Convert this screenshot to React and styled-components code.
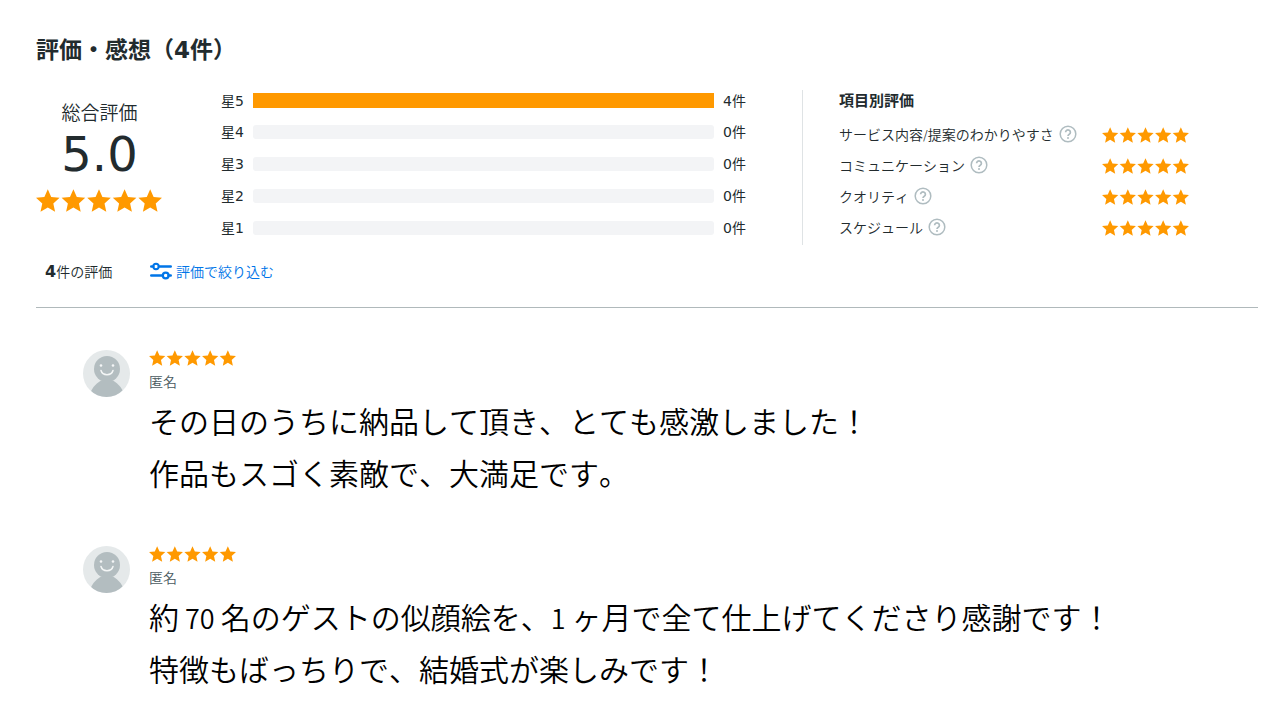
import React, { useId, useState } from 'react'
import styled, { createGlobalStyle } from 'styled-components'

const GlobalStyle = createGlobalStyle`
* { box-sizing: border-box; }
body {
  margin: 0;
  background: #fff;
  color: #222b2e;
  font-family: "DejaVu Sans", "Noto Sans CJK JP", sans-serif;
  font-size: 14px;
  font-kerning: none;
}
`
const Page = styled.main`
padding: 34px 22px 16px 36px;
`
const Heading = styled.h2`
margin: 0;
font-size: 23px;
line-height: 32px;
font-weight: 700;
`
const Summary = styled.section`
display: flex;
align-items: flex-start;
margin-top: 24px;
`
const Total = styled.div`
width: 127px;
margin-right: 58px;
padding-top: 11px;
text-align: center;
`
const TotalLabel = styled.div`
font-size: 19px;
font-weight: 350;
line-height: 24px;
`
const Score = styled.div`
font-size: 48px;
line-height: 58px;
margin-bottom: 6px;
`
const Stars = styled.svg`
display: block;
fill: #ff9900;
width: ${({ $large }) => ($large ? '126px' : '87px')};
height: ${({ $large }) => ($large ? '23px' : '16px')};
`
const Bars = styled.dl`
flex: 1;
margin: 0;
`
const BarRow = styled.div`
display: flex;
align-items: center;
height: 32px;
&:first-child { height: 21px; margin-bottom: 5px; }
`
const BarLabel = styled.dt`
width: 32px;
padding-bottom: 2px;
`
const Bar = styled.div`
flex: 1;
height: ${({ $full }) => ($full ? '15px' : '14px')};
border-radius: ${({ $full }) => ($full ? '0' : '3px')};
background: #f3f4f6;
`
const BarFill = styled.div`
height: 100%;
background: #ff9900;
`
const BarCount = styled.dd`
width: 88px;
margin: 0;
padding: 0 0 2px 9px;
`
const Items = styled.div`
width: 456px;
height: 155px;
padding-left: 36px;
border-left: 1px solid #dfe3e5;
`
const ItemsTitle = styled.h3`
margin: 0;
font-size: 15px;
line-height: 23px;
margin-bottom: 6px;
`
const ItemRow = styled.div`
display: flex;
align-items: center;
height: 31px;
`
const ItemName = styled.div`
display: flex;
align-items: center;
width: 263px;
padding-bottom: 2px;
font-weight: 350;
`
const HelpButton = styled.button`
display: flex;
margin-left: 5px;
padding: 0;
border: none;
background: none;
color: #afbcc0;
cursor: pointer;
`
const Toolbar = styled.div`
display: flex;
align-items: center;
height: 63px;
padding: 0 0 11px 9px;
border-bottom: 1px solid #b0b9bb;
`
const Count = styled.p`
width: 105px;
margin: 0;
font-size: 14px;
font-weight: 350;
`
const CountNumber = styled.strong`
font-size: 16px;
font-weight: 700;
`
const FilterButton = styled.button`
display: flex;
align-items: center;
gap: 4px;
padding: 0;
border: none;
background: none;
color: #0075e8;
font-family: inherit;
font-size: 14px;
font-weight: 350;
cursor: pointer;
`
const ReviewList = styled.ul`
list-style: none;
margin: 0;
padding: 42px 0 0 47px;
`
const Review = styled.li`
display: flex;
gap: 19px;
& + & { margin-top: 48px; }
`
const Avatar = styled.svg`
flex: none;
width: 47px;
height: 47px;
`
const Author = styled.div`
margin-top: 5px;
line-height: 22px;
font-weight: 350;
color: #4a5a60;
`
const Comment = styled.div`
margin-top: 1px;
color: #000;
font-family: "Noto Sans CJK JP", sans-serif;
font-size: 30px;
font-weight: 350;
`
const Line = styled.p`
margin: 0;
line-height: 52px;
`
const Figure = styled.span`
font-size: 27px;
line-height: 1;
`

const bars = [
  { star: 5, count: 4 },
  { star: 4, count: 0 },
  { star: 3, count: 0 },
  { star: 2, count: 0 },
  { star: 1, count: 0 },
]

const items = ['サービス内容/提案のわかりやすさ', 'コミュニケーション', 'クオリティ', 'スケジュール']

const reviews = [
  {
    id: 1,
    name: '匿名',
    lines: ['その日のうちに納品して頂き、とても感激しました！', '作品もスゴく素敵で、大満足です。'],
  },
  {
    id: 2,
    name: '匿名',
    lines: ['約 70 名のゲストの似顔絵を、1 ヶ月で全て仕上げてくださり感謝です！', '特徴もばっちりで、結婚式が楽しみです！'],
  },
]

const starPoints = (cx) => {
  const points = []
  for (let i = 0; i < 10; i++) {
    const r = i % 2 ? 5.8 : 12.4
    const a = (Math.PI * i) / 5
    points.push(`${(cx + r * Math.sin(a)).toFixed(2)},${(12.6 - r * Math.cos(a)).toFixed(2)}`)
  }
  return points.join(' ')
}

const Rating = ({ large }) => (
  <Stars $large={large} viewBox="0 0 126 23" role="img" aria-label="5">
    {[0, 1, 2, 3, 4].map((i) => (
      <polygon key={i} points={starPoints(11.8 + i * 25.6)} />
    ))}
  </Stars>
)

const HelpIcon = () => (
  <svg width="18" height="18" viewBox="0 0 18 18" fill="none" stroke="currentColor">
    <circle cx="9" cy="9" r="7.8" strokeWidth="1.5" />
    <path d="M6.6 7.3a2.4 2.3 0 1 1 3.7 1.9c-.9.6-1.3 1-1.3 1.9" strokeWidth="1.7" />
    <circle cx="9" cy="13" r="1" fill="currentColor" stroke="none" />
  </svg>
)

const FilterIcon = () => (
  <svg width="22" height="18" viewBox="0 0 22 18" fill="none" stroke="currentColor" strokeWidth="2.6" strokeLinecap="round">
    <path d="M1.3 4.5h2M9 4.5h11.700M1.300 13.500h11.500M18.600 13.500h2.100" />
    <circle cx="6" cy="4.5" r="2.7" strokeWidth="2" />
    <circle cx="15.7" cy="13.5" r="2.9" strokeWidth="2.2" />
  </svg>
)

const Person = () => {
  const id = useId()
  return (
    <Avatar viewBox="0 0 47 47" aria-hidden="true">
      <clipPath id={id}>
        <circle cx="23.5" cy="23.5" r="23.5" />
      </clipPath>
      <g clipPath={`url(#${id})`}>
        <rect width="47" height="47" fill="#e5e9ea" />
        <circle cx="24" cy="19" r="13" fill="#b3bdc0" />
        <path d="M6 47c2-8 6-13 12-16.5h12c6 3.5 10 8.5 12 16.5z" fill="#b3bdc0" />
        <circle cx="18" cy="15.5" r="1.3" fill="#f4f6f6" />
        <circle cx="30" cy="15.5" r="1.3" fill="#f4f6f6" />
        <path d="M18 20.5c1.5 5.500 10.500 5.500 12 0" fill="none" stroke="#f4f6f6" strokeWidth="1.5" strokeLinecap="round" />
      </g>
    </Avatar>
  )
}

const App = () => {
  const [filterOpen, setFilterOpen] = useState(false)
  return (
    <Page>
      <GlobalStyle />
      <Heading>評価・感想（4件）</Heading>
      <Summary>
        <Total>
          <TotalLabel>総合評価</TotalLabel>
          <Score>5.0</Score>
          <Rating large />
        </Total>
        <Bars>
          {bars.map(({ star, count }) => (
            <BarRow key={star}>
              <BarLabel>星{star}</BarLabel>
              <Bar $full={count > 0}>
                <BarFill style={{ width: `${(count / 4) * 100}%` }} />
              </Bar>
              <BarCount>{count}件</BarCount>
            </BarRow>
          ))}
        </Bars>
        <Items>
          <ItemsTitle>項目別評価</ItemsTitle>
          {items.map((item) => (
            <ItemRow key={item}>
              <ItemName>
                {item}
                <HelpButton type="button" aria-label={item}>
                  <HelpIcon />
                </HelpButton>
              </ItemName>
              <Rating />
            </ItemRow>
          ))}
        </Items>
      </Summary>
      <Toolbar>
        <Count>
          <CountNumber>4</CountNumber>件の評価
        </Count>
        <FilterButton type="button" aria-expanded={filterOpen} onClick={() => setFilterOpen(!filterOpen)}>
          <FilterIcon />
          評価で絞り込む
        </FilterButton>
      </Toolbar>
      <ReviewList>
        {reviews.map(({ id, name, lines }) => (
          <Review key={id}>
            <Person />
            <div>
              <Rating />
              <Author>{name}</Author>
              <Comment>
                {lines.map((line) => (
                  <Line key={line}>
                    {line.split(/( ?\d+ )/).map((part, i) => (i % 2 ? <Figure key={i}>{part}</Figure> : part))}
                  </Line>
                ))}
              </Comment>
            </div>
          </Review>
        ))}
      </ReviewList>
    </Page>
  )
}

export default App
